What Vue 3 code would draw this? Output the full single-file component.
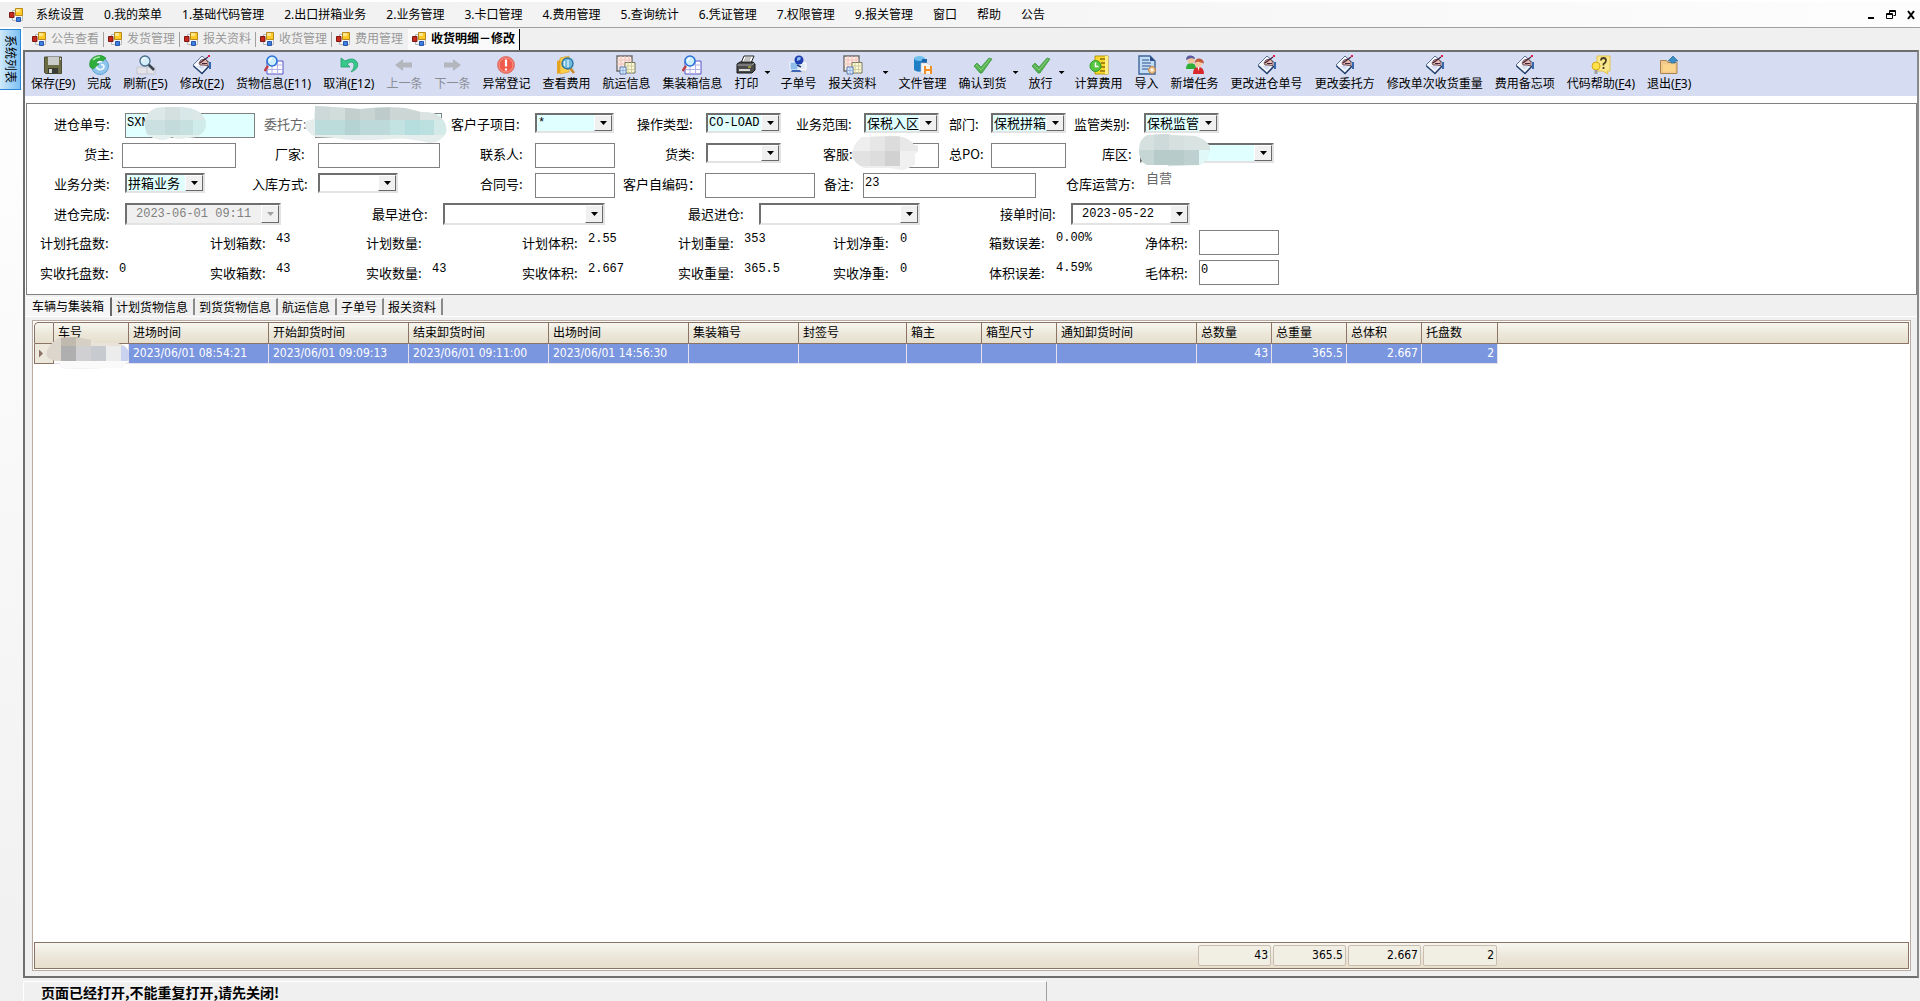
<script setup>
const menus = ['系统设置', '0.我的菜单', '1.基础代码管理', '2.出口拼箱业务', '2.业务管理', '3.卡口管理', '4.费用管理', '5.查询统计', '6.凭证管理', '7.权限管理', '9.报关管理', '窗口', '帮助', '公告']
const docTabs = ['公告查看', '发货管理', '报关资料', '收货管理', '费用管理', '收货明细－修改']
const tools = [
  { t: '保存', k: '9', i: 'save' },
  { t: '完成', i: 'done' },
  { t: '刷新', k: '5', i: 'find' },
  { t: '修改', k: '2', i: 'edit' },
  { t: '货物信息', k: '11', i: 'sheet' },
  { t: '取消', k: '12', i: 'undo' },
  { t: '上一条', i: 'prev', off: true },
  { t: '下一条', i: 'next', off: true },
  { t: '异常登记', i: 'warn' },
  { t: '查看费用', i: 'fee' },
  { t: '航运信息', i: 'tables' },
  { t: '集装箱信息', i: 'sheet' },
  { t: '打印', i: 'print', drop: true },
  { t: '子单号', i: 'net' },
  { t: '报关资料', i: 'tables', drop: true },
  { t: '文件管理', i: 'files' },
  { t: '确认到货', i: 'check', drop: true },
  { t: '放行', i: 'check', drop: true },
  { t: '计算费用', i: 'clock' },
  { t: '导入', i: 'import' },
  { t: '新增任务', i: 'users' },
  { t: '更改进仓单号', i: 'edit' },
  { t: '更改委托方', i: 'edit' },
  { t: '修改单次收货重量', i: 'edit' },
  { t: '费用备忘项', i: 'edit' },
  { t: '代码帮助', k: '4', i: 'help' },
  { t: '退出', k: '3', i: 'exit' },
]
const rows = [
  [
    { l: '进仓单号:', k: 'text', v: 'SXN', c: 'cyan', m: 'a' },
    { l: '委托方:', k: 'text', v: '', c: 'cyan', m: 'b', dim: true },
    { l: '客户子项目:', k: 'combo', v: '*', c: 'cyan mono' },
    { l: '操作类型:', k: 'combo', v: 'CO-LOAD', c: 'cyan mono' },
    { l: '业务范围:', k: 'combo', v: '保税入区', c: 'cyan' },
    { l: '部门:', k: 'combo', v: '保税拼箱', c: 'cyan' },
    { l: '监管类别:', k: 'combo', v: '保税监管', c: 'cyan' },
  ],
  [
    { l: '货主:', k: 'text', v: '' },
    { l: '厂家:', k: 'text', v: '' },
    { l: '联系人:', k: 'text', v: '' },
    { l: '货类:', k: 'combo', v: '' },
    { l: '客服:', k: 'text', v: '', m: 'c' },
    { l: '总PO:', k: 'text', v: '' },
    { l: '库区:', k: 'combo', v: '', c: 'cyan', m: 'd' },
  ],
  [
    { l: '业务分类:', k: 'combo', v: '拼箱业务', c: 'cyan' },
    { l: '入库方式:', k: 'combo', v: '' },
    { l: '合同号:', k: 'text', v: '' },
    { l: '客户自编码：', k: 'text', v: '' },
    { l: '备注:', k: 'text', v: '23' },
    { l: '仓库运营方:', k: 'out', v: '自营', c: 'dim' },
  ],
  [
    { l: '进仓完成:', k: 'combo', v: '2023-06-01 09:11', c: 'date off', off: true },
    { l: '最早进仓:', k: 'combo', v: '', c: 'date' },
    { l: '最迟进仓:', k: 'combo', v: '', c: 'date' },
    { l: '接单时间:', k: 'combo', v: '2023-05-22', c: 'date' },
  ],
  [
    { l: '计划托盘数:', k: 'out', v: '' },
    { l: '计划箱数:', k: 'out', v: '43' },
    { l: '计划数量:', k: 'out', v: '' },
    { l: '计划体积:', k: 'out', v: '2.55' },
    { l: '计划重量:', k: 'out', v: '353' },
    { l: '计划净重:', k: 'out', v: '0' },
    { l: '箱数误差:', k: 'out', v: '0.00%', c: 'rate' },
    { l: '净体积:', k: 'text', v: '' },
  ],
  [
    { l: '实收托盘数:', k: 'out', v: '0' },
    { l: '实收箱数:', k: 'out', v: '43' },
    { l: '实收数量:', k: 'out', v: '43' },
    { l: '实收体积:', k: 'out', v: '2.667' },
    { l: '实收重量:', k: 'out', v: '365.5' },
    { l: '实收净重:', k: 'out', v: '0' },
    { l: '体积误差:', k: 'out', v: '4.59%', c: 'rate' },
    { l: '毛体积:', k: 'text', v: '0' },
  ],
]
const pageTabs = ['车辆与集装箱', '计划货物信息', '到货货物信息', '航运信息', '子单号', '报关资料']
const cols = [
  { t: '车号', w: 75 },
  { t: '进场时间', w: 140, v: '2023/06/01 08:54:21' },
  { t: '开始卸货时间', w: 140, v: '2023/06/01 09:09:13' },
  { t: '结束卸货时间', w: 140, v: '2023/06/01 09:11:00' },
  { t: '出场时间', w: 140, v: '2023/06/01 14:56:30' },
  { t: '集装箱号', w: 110 },
  { t: '封签号', w: 108 },
  { t: '箱主', w: 75 },
  { t: '箱型尺寸', w: 75 },
  { t: '通知卸货时间', w: 140 },
  { t: '总数量', w: 75, v: '43', n: true },
  { t: '总重量', w: 75, v: '365.5', n: true },
  { t: '总体积', w: 75, v: '2.667', n: true },
  { t: '托盘数', w: 76, v: '2', n: true },
]
/* Mosaic patches that hide private values: clip outline plus [x, y, w, h, fill] tiles. */
const masks = {
  a: {
    w: 62, h: 34,
    d: 'M12 1Q22 -1 45 1Q60 4 62 16Q62 26 52 30L34 32L28 30L20 33Q8 32 3 27Q-2 14 3 8Q6 3 12 1Z',
    b: [[0, 0, 62, 34, '#dce8e7'], [21, 0, 15, 13, '#d3e0df'], [36, 0, 13, 13, '#d8e8e8'], [0, 13, 21, 15, '#cbe0e0'], [21, 13, 15, 15, '#c3dbdb'], [36, 13, 13, 15, '#c6dfdf'], [49, 13, 13, 15, '#cfeceb'], [0, 28, 62, 6, '#e6f0ef']],
  },
  b: {
    w: 142, h: 38,
    d: 'M10 1Q30 2 55 4Q80 1 100 3L116 7Q134 6 140 18Q144 28 137 33Q130 40 120 37Q100 32 85 34Q50 37 30 33L10 32Q-3 24 1 16L9 14Z',
    b: [[0, 0, 142, 38, '#e6eeed'], [10, 0, 15, 15, '#cdd9d8'], [25, 0, 15, 15, '#d0dddb'], [40, 0, 15, 15, '#c2cfcd'], [55, 0, 15, 15, '#c9d5d3'], [70, 0, 15, 15, '#bdcbca'], [85, 0, 30, 15, '#cbd6d5'], [115, 0, 27, 15, '#dae3e2'], [10, 15, 30, 15, '#bcdcdc'], [40, 15, 15, 15, '#b6d3d3'], [55, 15, 30, 15, '#bdd9d9'], [85, 15, 15, 15, '#c3e2e2'], [100, 15, 15, 15, '#b6dede'], [115, 15, 14, 15, '#bce0e0'], [129, 15, 13, 15, '#d4eae9']],
  },
  c: {
    w: 66, h: 34,
    d: 'M10 1L45 0Q58 2 62 9L66 10V15L63 18V28Q60 31 50 34L38 32L12 32Q3 28 0 20Q0 8 10 1Z',
    b: [[0, 0, 66, 34, '#eeeeee'], [18, 0, 15, 15, '#e6e6e6'], [33, 0, 15, 15, '#dcdcdc'], [48, 0, 18, 15, '#e8e8e8'], [0, 15, 18, 15, '#e2e2e2'], [18, 15, 15, 15, '#dddddd'], [33, 15, 15, 15, '#d1d1d1'], [48, 15, 18, 19, '#f0f0f0']],
  },
  d: {
    w: 71, h: 33,
    d: 'M8 1L30 0L32 1L56 2Q70 6 71 15Q69 28 60 31L31 32L30 33L29 31L8 31Q0 27 0 16Q0 5 8 1Z',
    b: [[0, 0, 71, 33, '#d6e0df'], [15, 0, 15, 16, '#cedad9'], [45, 0, 26, 16, '#d9e3e2'], [0, 16, 15, 15, '#c5d6d5'], [15, 16, 30, 15, '#b7cbca'], [45, 16, 15, 15, '#bed1d0'], [60, 16, 11, 15, '#e0f8f7']],
  },
  e: {
    w: 84, h: 33,
    d: 'M14 1L30 0L46 3L50 6H72L78 8Q84 12 84 18Q84 26 76 31H60L20 32Q14 30 14 24Q4 24 1 18Q2 8 14 1Z',
    b: [[0, 0, 84, 33, '#ddd6cc'], [16, 0, 15, 9, '#c0baae'], [31, 0, 15, 9, '#d6cfc3'], [46, 0, 38, 9, '#e9e2d8'], [16, 9, 15, 15, '#afafb0'], [31, 9, 15, 15, '#d0cfd2'], [46, 9, 15, 15, '#c7cace'], [61, 9, 15, 15, '#ececec'], [76, 9, 8, 15, '#c9d3ef'], [0, 24, 84, 9, '#fafafa']],
  },
}
</script>

<template>
  <div class="app">
    <svg class="defs" aria-hidden="true">
      <symbol id="i-form" viewBox="0 0 14 14">
        <path d="M3.500 2.500h10v10h-10z" fill="#f4f4f4" stroke="#b9b9b9" />
        <path d="M6.500 .5h7v7h-7z" fill="#ffc928" stroke="#b98a1c" /><path d="M7 1h4v3H7z" fill="#ffe88c" />
        <path d="M.5 4.500h4.500v5H.5z" fill="#c8281e" stroke="#7d1a14" />
        <path d="M7.500 9.500h4v4h-4z" fill="#3f7fe0" stroke="#2656a8" />
      </symbol>
      <symbol id="i-save" viewBox="0 0 20 20">
        <path d="M1.500 2h17v16.500h-16l-1-1z" fill="#6c6c45" stroke="#4e4e38" /><path d="M5 2h11v8H5z" fill="#c9ccca" /><path d="M5 13h10v5.500H5z" fill="#393a33" /><path d="M6 14h3v4H6z" fill="#d7d7d2" /><path d="M17 3h1v2h-1z" fill="#ddd" />
      </symbol>
      <symbol id="i-done" viewBox="0 0 20 20">
        <circle cx="11" cy="11" r="8.500" fill="#8fc5ea" stroke="#5c9fd0" /><path d="M13 7a4 4 0 1 0 2 5q0-3-3-2" fill="none" stroke="#eef8ff" stroke-width="1.800" />
        <path d="M1 12Q-1 4 7 1Q13-1 17 3L14 6Q9 4 7 8L10 9L4 14z" fill="#2fae3c" stroke="#1d8a2b" stroke-width=".6" /><path d="M4 5Q7 2 11 2" fill="none" stroke="#a4eca4" stroke-width="1.500" />
      </symbol>
      <symbol id="i-find" viewBox="0 0 20 20">
        <path d="M1 12h18v7H1z" fill="#e3e2e8" stroke="#c4c3cc" /><path d="M11 12v7" stroke="#c4c3cc" /><path d="M12.500 9.500L18 15" stroke="#3a4450" stroke-width="2.500" /><circle cx="9" cy="6" r="5" fill="#d4effa" stroke="#4a6f8c" stroke-width="1.300" /><path d="M6 6a3 3 0 0 1 3-3" fill="none" stroke="#fff" stroke-width="1.300" />
      </symbol>
      <symbol id="i-edit" viewBox="0 0 20 20">
        <path d="M10 1L19 9L10 19L1 10z" fill="#f6f8ff" stroke="#5f7396" stroke-width="1" /><path d="M1.500 11L10 18.500L17 11" fill="none" stroke="#27446f" stroke-width="1.600" /><path d="M5 11L10 15L14 10" fill="#d8e0f4" /><path d="M7 8Q8 4 13 4L16 7V11L12 10L8 10z" fill="#e6b8ab" stroke="#4b3040" stroke-width=".8" /><path d="M8 8L16 2M10 8.500h5" stroke="#42253c" stroke-width="1.200" /><path d="M17 7h2v7h-2z" fill="#3767b0" /><path d="M16 0h2v2h-2z" fill="#e21c4f" />
      </symbol>
      <symbol id="i-sheet" viewBox="0 0 20 20">
        <path d="M3 6h16v13H3z" fill="#fafaff" stroke="#5857c6" /><path d="M3 10h16M3 14.500h16M8 6v13M13.500 6v13" stroke="#b3b2e8" /><path d="M4 11L0.500 16" stroke="#c03e43" stroke-width="2.400" /><circle cx="8" cy="6" r="5" fill="#cdeefb" stroke="#2b72d6" stroke-width="1.600" /><path d="M5.500 6A2.500 2.500 0 0 1 8 3.500" fill="none" stroke="#fff" stroke-width="1.300" />
      </symbol>
      <symbol id="i-undo" viewBox="0 0 20 20">
        <path d="M2 3v9h9l-3-3q5-4 7 0q1 4-3 8q8-3 6.500-9Q15 1 6 6z" fill="#36c98c" stroke="#1f9d6a" stroke-width=".8" />
      </symbol>
      <symbol id="i-prev" viewBox="0 0 20 20"><path d="M1 10L9 4v3.500h9v5H9V16z" fill="#b4b6bd" /></symbol>
      <symbol id="i-next" viewBox="0 0 20 20"><path d="M19 10L11 4v3.500H2v5h9V16z" fill="#b4b6bd" /></symbol>
      <symbol id="i-warn" viewBox="0 0 20 20">
        <circle cx="10" cy="10" r="8.500" fill="#ef5a4c" stroke="#d98078" /><circle cx="10" cy="10" r="7" fill="none" stroke="#f79a90" /><path d="M10 4.500v7M10 13.500v2" stroke="#fff" stroke-width="2.200" />
      </symbol>
      <symbol id="i-fee" viewBox="0 0 20 20">
        <path d="M1 6l3-1v13l-3 1z" fill="#e6a521" /><path d="M4 3l9-2v16l-9 2z" fill="#ffcf4a" stroke="#d99b1f" stroke-width=".6" /><path d="M15 3h3v11h-3" fill="#b9dcec" /><path d="M14 13l4 5" stroke="#c98a24" stroke-width="2.500" /><circle cx="11.500" cy="8.500" r="5.500" fill="#6fb9dd" stroke="#2c6f9e" stroke-width="1.300" /><path d="M8.500 6v5M12 5v7" stroke="#d2ecf8" stroke-width="1.500" />
      </symbol>
      <symbol id="i-tables" viewBox="0 0 20 20">
        <path d="M1 1h15v15H1z" fill="#fbeae4" stroke="#6b6b6b" stroke-width="1.400" /><path d="M1 5h15M1 9h15M5 1v15M9 1v15M13 1v15" stroke="#efc0b6" /><path d="M9 7.500h10V18H9z" fill="#fbf8d5" stroke="#77775a" /><path d="M9 11h10M9 14.500h10M12 7.500V18M15.500 7.500V18" stroke="#d2cda0" /><path d="M4 12h6v7H4z" fill="#dcebff" stroke="#5978a8" /><path d="M7 12v7M4 15.500h6" stroke="#93b1df" />
      </symbol>
      <symbol id="i-print" viewBox="0 0 20 20">
        <path d="M5 8L8 1h10l-3 7z" fill="#fff" stroke="#222" /><path d="M9 3h6M8 5h6" stroke="#888" /><path d="M1 9l3-2h13l2 2v6l-3 3H1z" fill="#4b4b4b" stroke="#151515" /><path d="M1.500 10h14l3-2" fill="none" stroke="#a9a9a9" /><path d="M3 14h11v2H3z" fill="#d9d9d9" /><path d="M12 11.500h3v1h-3z" fill="#e8dc3b" />
      </symbol>
      <symbol id="i-net" viewBox="0 0 20 20">
        <path d="M1 14h18l-1 4H2z" fill="#d3d7de" /><path d="M2 7h8v8H2z" fill="#8fbdec" stroke="#f4f8ff" /><path d="M12 8h6v7h-6z" fill="#e4eaf2" stroke="#fff" /><circle cx="11" cy="5" r="4.500" fill="#1f3fae" /><path d="M9 3q2-2 4 0l-1 2-3 1z" fill="#8fb8f4" /><path d="M4 15h8l2 2H3z" fill="#3e67b8" /><path d="M9 10l4 2" stroke="#203c7c" stroke-width="1.500" />
      </symbol>
      <symbol id="i-files" viewBox="0 0 20 20">
        <path d="M1 3v12q4 3 8 1V4z" fill="#1f7fc6" /><ellipse cx="6.500" cy="3.500" rx="5.500" ry="2.500" fill="#6fc0ee" /><path d="M9 4h5v5H9z" fill="#1a66ad" /><path d="M8 8h6l4 3v8H8z" fill="#f6f6f6" stroke="#b8c0cc" stroke-width=".6" /><path d="M11 11h8v8h-8z" fill="#f08f2b" /><path d="M13 11h4v3h-4zM13 16h4v3h-4z" fill="#fff2dc" />
      </symbol>
      <symbol id="i-check" viewBox="0 0 20 20"><path d="M1 11l3-3 4 4L16 3l3 1L9 18H7z" fill="#55b050" stroke="#3f9a44" stroke-width=".8" /><path d="M3 10l5 5L17 4" fill="none" stroke="#86d07c" /></symbol>
      <symbol id="i-clock" viewBox="0 0 20 20">
        <path d="M6 1h13v18H6z" fill="#f6d92c" stroke="#b8960f" /><path d="M11 4h5M12 8h4M12 12h4M11 16h5" stroke="#8a6d0a" stroke-width="1.300" /><path d="M16 1h3v18h-3z" fill="#ffef80" /><circle cx="6.500" cy="11" r="5.500" fill="#58c542" stroke="#2f9a26" /><path d="M6.500 7.500V11.500h3" fill="none" stroke="#fff" stroke-width="1.500" />
      </symbol>
      <symbol id="i-import" viewBox="0 0 20 20">
        <path d="M2 1h11l5 5v13H2z" fill="#c3dcf5" stroke="#3d6597" stroke-width="1.400" /><path d="M5 5h7M5 8h9M5 11h9M5 14h6" stroke="#5c80b0" stroke-width="1.300" /><path d="M13 1v5h5z" fill="#2b4d8b" /><circle cx="15" cy="15" r="3.500" fill="#f1c996" stroke="#b98248" /><circle cx="15" cy="15" r="1.200" fill="#fff" />
      </symbol>
      <symbol id="i-users" viewBox="0 0 20 20">
        <path d="M1 14q0-6 5-6t5 6z" fill="#2fae3a" /><circle cx="6" cy="5" r="3.500" fill="#f3c39a" /><path d="M1 5q0-5 5-4.500Q10 1 10 4L6 3z" fill="#5a5a9c" /><path d="M8 19q0-7 5.500-7t5.500 7z" fill="#d82a2a" /><circle cx="13.500" cy="8.500" r="3.500" fill="#f6c8a0" /><path d="M9.500 8q1-5 5-4.500 4 .5 4.500 5L13 6.500z" fill="#c0583c" /><path d="M12.500 12h2l-1 4z" fill="#fff" />
      </symbol>
      <symbol id="i-help" viewBox="0 0 20 20">
        <path d="M6 1h13v15h-3l1 3-5-3H6z" fill="#fbe78d" stroke="#e3c34a" /><circle cx="5" cy="11" r="4" fill="#ffe24b" stroke="#d6a91b" /><path d="M3.500 15h3v4h-3z" fill="#9f9f9f" /><path d="M10 5.500q0-2.500 2.500-2.500T15 5.500q0 2-2.500 3.500v1.500M12.500 12v2" fill="none" stroke="#4a4020" stroke-width="1.800" />
      </symbol>
      <symbol id="i-exit" viewBox="0 0 20 20">
        <path d="M1.500 5.500h6l1.500 2h9v11H1.500z" fill="#f2c98a" stroke="#a98552" /><path d="M4 9.500h12v7H4z" fill="#fcd68c" /><path d="M9 6L14 1l5 5h-3v2h-4V6z" fill="#3c8fc6" stroke="#246995" stroke-width=".7" />
      </symbol>
    </svg>

    <header class="menubar">
      <svg class="logo"><use href="#i-form" /></svg>
      <nav><button v-for="m in menus" :key="m" type="button">{{ m }}</button></nav>
      <div class="winctl">
        <button type="button" aria-label="最小化"><svg viewBox="0 0 10 10"><path d="M2 8h6" stroke="#000" stroke-width="2" /></svg></button>
        <button type="button" aria-label="还原"><svg viewBox="0 0 10 10"><path d="M3.500 3.500V.5h6v5h-2M3.500 1.500h6M.5 3.500h6v5h-6zM.5 4.500h6" fill="none" stroke="#000" /></svg></button>
        <button type="button" aria-label="关闭"><svg viewBox="0 0 10 10"><path d="M2 1l6 8M8 1L2 9" stroke="#000" stroke-width="2" /></svg></button>
      </div>
    </header>

    <div class="body">
      <aside><button type="button" class="side-tab">系统列表</button></aside>
      <main>
        <nav class="doc-tabs">
          <button v-for="(d, n) in docTabs" :key="d" type="button" :class="{ on: n === 5 }">
            <svg class="logo"><use href="#i-form" /></svg>{{ d }}
          </button>
        </nav>

        <section class="frame">
          <div class="toolbar">
            <div v-for="(t, n) in tools" :key="n" class="tool">
              <button type="button" :disabled="t.off">
                <svg><use :href="'#i-' + t.i" /></svg>
                <span>{{ t.t }}<template v-if="t.k">(<u>F</u>{{ t.k }})</template></span>
              </button>
              <i v-if="t.drop" class="caret"></i>
            </div>
          </div>

          <form class="panel" @submit.prevent>
            <div v-for="(r, y) in rows" :key="y" class="row" :class="'r' + (y + 1)">
              <div v-for="(f, x) in r" :key="x" class="field">
                <label :for="'f' + y + '-' + x" :class="{ dim: f.dim }">{{ f.l }}</label>
                <div class="ctrl" :class="f.c">
                  <input v-if="f.k === 'text'" :id="'f' + y + '-' + x" type="text" :value="f.v" />
                  <span v-else-if="f.k === 'combo'" class="combo">
                    <select :id="'f' + y + '-' + x" :disabled="f.off"><option>{{ f.v }}</option></select>
                  </span>
                  <output v-else :id="'f' + y + '-' + x">{{ f.v }}</output>
                  <svg v-if="f.m" class="mask" :class="'mask-' + f.m" :viewBox="`0 0 ${masks[f.m].w} ${masks[f.m].h}`" :width="masks[f.m].w" :height="masks[f.m].h">
                    <clipPath :id="'clip-' + f.m"><path :d="masks[f.m].d" /></clipPath>
                    <g :clip-path="`url(#clip-${f.m})`"><rect v-for="(b, n) in masks[f.m].b" :key="n" :x="b[0]" :y="b[1]" :width="b[2]" :height="b[3]" :fill="b[4]" /></g>
                  </svg>
                </div>
              </div>
            </div>
          </form>

          <nav class="page-tabs">
            <button v-for="(p, n) in pageTabs" :key="p" type="button" :class="{ on: n === 0 }">{{ p }}</button>
          </nav>

          <div class="page">
            <div class="grid">
              <div class="grid-body">
                <table>
                  <colgroup><col class="c-mark" /><col v-for="c in cols" :key="c.t" :style="{ width: c.w + 'px' }" /><col /></colgroup>
                  <thead><tr><th class="mark"></th><th v-for="c in cols" :key="c.t">{{ c.t }}</th><th class="rest"></th></tr></thead>
                  <tbody>
                    <tr>
                      <td class="mark"><i></i></td>
                      <td v-for="(c, n) in cols" :key="c.t" :class="{ num: c.n, plate: n === 0 }">
                        {{ c.v }}
                        <svg v-if="n === 0" class="mask mask-e" viewBox="0 0 84 33" width="84" height="33">
                          <clipPath id="clip-e"><path :d="masks.e.d" /></clipPath>
                          <g clip-path="url(#clip-e)"><rect v-for="(b, k) in masks.e.b" :key="k" :x="b[0]" :y="b[1]" :width="b[2]" :height="b[3]" :fill="b[4]" /></g>
                        </svg>
                      </td>
                      <td class="rest"></td>
                    </tr>
                  </tbody>
                </table>
              </div>
              <table class="totals">
                <colgroup><col class="c-mark" /><col v-for="c in cols" :key="c.t" :style="{ width: c.w + 'px' }" /><col /></colgroup>
                <tbody><tr><td></td><td v-for="c in cols" :key="c.t"><div v-if="c.n">{{ c.v }}</div></td><td></td></tr></tbody>
              </table>
            </div>
          </div>
        </section>

        <footer><p>页面已经打开,不能重复打开,请先关闭!</p></footer>
      </main>
    </div>
  </div>
</template>

<style>
body { margin: 0; background: #f0f0f0; }
</style>

<style scoped>
* { box-sizing: border-box; }
.app { min-height: 100vh; display: flex; flex-direction: column; font: 12px/16px "Noto Sans", "Noto Sans CJK SC", sans-serif; color: #000; }
button { font: inherit; color: inherit; background: none; border: 0; padding: 0; white-space: nowrap; }
.defs { position: absolute; width: 0; height: 0; }
.logo { width: 14px; height: 14px; flex: none; }

.menubar { height: 27px; display: flex; align-items: center; padding: 0 4px 0 9px; background: linear-gradient(90deg, #f0f0f0, #f5f5f5 50%, #fdfdfd); border-top: 2px solid #fff; }
.menubar nav { display: flex; padding-left: 3px; flex: 1; }
.menubar nav button { padding: 0 10px; }
.winctl { display: flex; gap: 10px; }
.winctl svg { display: block; width: 10px; height: 10px; }

.body { flex: 1; display: flex; }
aside { width: 23px; flex: none; background: linear-gradient(#fff, #f0f0f0); padding-top: 2px; }
.side-tab { width: 21px; height: 61px; writing-mode: vertical-rl; text-orientation: sideways; line-height: 18px; border: 1px solid #2a86d6; border-left: 0; background: linear-gradient(90deg, #cfe9fb, #7cc0f2); }
main { flex: 1; min-width: 0; display: flex; flex-direction: column; padding-right: 1px; }

.doc-tabs { height: 23px; display: flex; align-items: center; border-top: 1px solid #a0a0a0; background: #f0f0f0; padding-left: 5px; margin-right: -1px; }
.doc-tabs button { display: flex; align-items: center; gap: 5px; height: 15px; padding: 0 4px; border-right: 1px solid #a0a0a0; color: #9a9a9a; }
.doc-tabs button:nth-last-child(2) { border-right-color: transparent; }
.doc-tabs .on { height: 21px; font-weight: 700; color: #000; background: #fafafa; border-right-color: #000; }

.frame { flex: 1; display: flex; flex-direction: column; border: 2px solid; border-color: #6e6e6e #8a8a8a #6e6e6e #6e6e6e; background: #fff; }
.toolbar { height: 44px; display: flex; background: #d6ddf2; }
.tool { display: flex; }
.tool button { display: flex; flex-direction: column; align-items: center; padding: 3px 6px 0; }
.tool svg { width: 20px; height: 20px; display: block; }
.tool span { line-height: 18px; }
.tool button:disabled { color: #8a8d96; }
.caret { width: 10px; padding-top: 19px; }
.caret::before { content: ""; display: block; width: 6px; height: 3px; background: #000; clip-path: polygon(0 0, 100% 0, 50% 100%); }

.panel { margin: 7px 0 0 1px; padding: 9px 0 4px 13px; border: 1px solid #808080; font-size: 13px; font-family: "Noto Sans CJK SC", sans-serif; }
.row { display: grid; height: 30px; align-items: start; }
.r1, .r2, .r3, .r4 { margin-left: 14px; }
.r4 { height: 27px; }
.field { display: contents; }
.field::after { content: ""; }
.r1 { grid-template-columns: 71px 130px 9px 51px 127px 9px 84px 79px 23px 69px 75px 15px 68px 75px 10px 42px 75px 8px 70px 75px; }
.r2 { margin-left: 44px; grid-template-columns: 38px 114px 39px 43px 122px 40px 55px 80px 50px 41px 75px 42px 41px 75px 10px 42px 75px 36px 38px 134px; }
.r3 { grid-template-columns: 71px 80px 47px 66px 80px 82px 55px 80px 8px 82px 110px 9px 39px 173px 30px 80px 80px; }
.r4 { grid-template-columns: 71px 156px 91px 71px 162px 83px 71px 161px 80px 71px 119px; }
.r5, .r6 { grid-template-columns: 79px 88px 3px 66px 88px 2px 66px 88px 2px 66px 88px 2px 66px 88px 1px 67px 87px 2px 67px 88px 1px 54px 80px; }
.panel label { line-height: 22px; white-space: nowrap; }
.r5 label, .r6 label { line-height: 26px; }
.dim { color: #666; }
.ctrl { position: relative; }
.ctrl input { display: block; width: 100%; height: 25px; margin: 0; padding: 0 1px 6px; border: 1px solid #808080; border-radius: 0; background: #fff; font: 12px/16px "Liberation Mono", monospace; outline: 0; }
.combo { display: block; position: relative; height: 20px; border: 2px solid; border-color: #6f6f6f #e3e3e3 #e3e3e3 #6f6f6f; background: #fff; }
.combo select { display: block; appearance: none; width: 100%; height: 16px; padding: 0 17px 0 1px; border: 0; margin: 0; background: none; color: #000; font: 13px/16px "Noto Sans CJK SC", sans-serif; outline: 0; opacity: 1; }
.combo::after { content: ""; position: absolute; right: 0; top: 0; bottom: 0; width: 16px; background: #f0f0f0; border: 1px solid; border-color: #fff #696969 #696969 #fff; pointer-events: none; }
.combo::before { content: ""; position: absolute; z-index: 1; right: 5px; top: calc(50% - 2px); width: 7px; height: 4px; background: #000; clip-path: polygon(0 0, 100% 0, 50% 100%); pointer-events: none; }
.cyan input, .cyan .combo { background: #e0ffff; }
.mono select, .date select { font: 12px/16px "Liberation Mono", monospace; }
.date .combo { height: 22px; }
.date select { height: 18px; padding-left: 9px; }
.off .combo { background: #f0f0f0; }
.off select { color: #808080; }
.off .combo::before { background: #a0a0a0; }
.ctrl output { display: block; font: 12px/18px "Liberation Mono", "Noto Sans CJK SC", monospace; }
.ctrl.rate output { line-height: 16px; }
.ctrl.dim output { font-size: 13px; line-height: 14px; }

.mask { position: absolute; z-index: 2; }
.mask-a { left: 19px; top: -6px; }
.mask-b { left: -10px; top: -8px; }
.mask-c { left: -12px; top: -7px; }
.mask-d { left: -1px; top: -9px; }
.mask-e { left: -9px; top: -7px; }

.page-tabs { display: flex; align-items: flex-end; height: 22px; padding: 2px 0 1px 1px; background: #f0f0f0; border-bottom: 1px solid #fff; }
.page-tabs button { height: 17px; line-height: 15px; padding: 0 5px 0 4px; border-right: 2px solid #8a8a8a; border-top: 1px solid #fff; }
.page-tabs .on { align-self: flex-start; height: 19px; padding: 0 6px 2px; background: #f6f6f6; border-right-color: #696969; }
.page { flex: 1; display: flex; background: #f0f0f0; padding: 3px 6px 5px 7px; }
.grid { flex: 1; min-width: 0; display: flex; flex-direction: column; border: 1px solid #b9ab9f; padding: 1px; background: #fff; }
.grid-body { flex: 1; }
table { width: 100%; table-layout: fixed; border-collapse: separate; border-spacing: 0; }
.c-mark { width: 20px; }
.totals .c-mark { width: 18px; }
th, td { padding: 0 4px; text-align: left; font-weight: 400; white-space: nowrap; }
th { height: 22px; line-height: 18px; border: solid #8b7365; border-width: 1px 1px 1px 0; background: linear-gradient(#f7f6ef, #ece8db 50%, #e6dfcd); }
th.mark { border-left-width: 1px; border-top-left-radius: 4px; }
.grid-body td { height: 20px; line-height: 19px; color: #fff; background: #7a96df; border: solid #e5e1ea; border-width: 0 1px 1px 0; font-family: "DejaVu Sans Condensed", "Noto Sans", sans-serif; }
td.num { text-align: right; }
.grid-body td.num { padding-right: 3px; }
.grid-body td.plate { position: relative; background: #fff; }
.grid-body td.mark { background: #ece8db; border-color: #8b7365; border-left-width: 1px; }
td.mark i { display: block; width: 4px; height: 8px; background: #8b7365; clip-path: polygon(0 0, 100% 50%, 0 100%); }
.grid-body td.rest { background: none; border: 0; }
.totals { height: 27px; border: 1px solid #8b7365; background: linear-gradient(#f7f6ef, #ece6da 55%, #e8dfcb); font-family: "DejaVu Sans Condensed", "Noto Sans", sans-serif; }
.totals td { padding: 0 0 0 2px; }
.totals div { height: 21px; line-height: 19px; padding-right: 2px; text-align: right; border: 1px solid #c9bdb0; border-radius: 2px; background: #f1eee4; }

footer { height: 20px; margin-top: 3px; display: flex; background: #f0f0f0; border-left: 1px solid #fff; }
footer p { margin: 0; width: 54%; flex: none; padding-left: 17px; border-top: 1px solid #fff; border-right: 1px solid #a0a0a0; font: 700 14px/20px "Noto Sans CJK SC", sans-serif; }
</style>
